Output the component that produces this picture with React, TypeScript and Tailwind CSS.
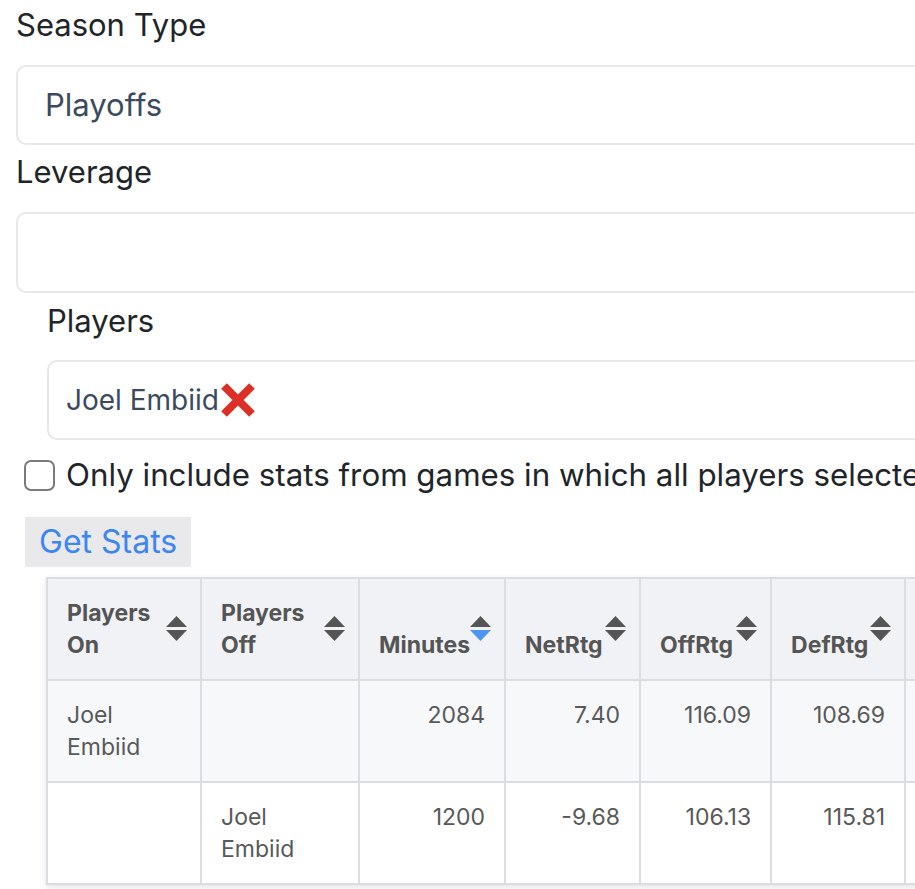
import React from "react";

type Col = { key: string; label: string; width: number; numeric?: boolean; active?: boolean };

const columns: Col[] = [
  { key: "on", label: "Players On", width: 154 },
  { key: "off", label: "Players Off", width: 158 },
  { key: "min", label: "Minutes", width: 146, numeric: true, active: true },
  { key: "net", label: "NetRtg", width: 135, numeric: true },
  { key: "ortg", label: "OffRtg", width: 131, numeric: true },
  { key: "drtg", label: "DefRtg", width: 134, numeric: true },
  { key: "more", label: "", width: 130, numeric: true },
];

const rows: Record<string, string>[] = [
  { on: "Joel Embiid", off: "", min: "2084", net: "7.40", ortg: "116.09", drtg: "108.69", more: "" },
  { on: "", off: "Joel Embiid", min: "1200", net: "-9.68", ortg: "106.13", drtg: "115.81", more: "" },
];

function SortCaret({ active }: { active?: boolean }) {
  return (
    <svg width="21" height="26" viewBox="0 0 21 26" className="absolute right-[13px] top-1/2 -translate-y-1/2">
      <polygon points="10.5,0 21,11 0,11" fill="#555" />
      <polygon points="0,14 21,14 10.5,25" fill={active ? "#4d94f5" : "#555"} />
    </svg>
  );
}

function RedX() {
  return (
    <svg width="38" height="36" viewBox="0 0 38 36" className="shrink-0">
      <line x1="5" y1="4" x2="33" y2="32" stroke="#dc2f27" strokeWidth="8" />
      <line x1="33" y1="4" x2="5" y2="32" stroke="#dc2f27" strokeWidth="8" />
    </svg>
  );
}

const label = "block text-[31px] leading-[38px] text-[#212529]";
const field = "rounded-[10px] border-2 border-[#e8e8ea] bg-white flex items-center text-[#3b4a5e]";

export default function App() {
  return (
    <div className="w-[915px] h-[889px] overflow-hidden bg-white font-['Inter',sans-serif]">
      <div className="w-[1200px] pt-[6px]">
        <div className="pl-4">
          <label className={label}>Season Type</label>
          <div className={`${field} mt-[21px] h-[80px] pl-[27px] text-[31px]`}>Playoffs</div>
          <label className={`${label} mt-[8px]`}>Leverage</label>
          <div className={`${field} mt-[21px] h-[81px]`} />
        </div>

        <div className="pl-[47px]">
          <label className={`${label} mt-[9px]`}>Players</label>
          <div className={`${field} mt-[20px] h-[80px] pl-[17px] text-[28px]`}>
            <span>Joel Embiid</span>
            <RedX />
          </div>
        </div>

        <div className="pl-6 mt-4 h-[38px] flex items-center">
          <span className="w-[31px] h-[31px] rounded-[7px] border-2 border-[#7a7a7a] bg-white shrink-0" />
          <span className="ml-[11px] text-[31.3px] leading-[38px] text-[#212529] whitespace-nowrap">
            Only include stats from games in which all players selected played
          </span>
        </div>

        <button className="ml-[25px] mt-[23px] h-[50px] px-[14px] bg-[#e9e9eb] text-[#3b86f0] text-[32px] leading-[50px]">
          Get Stats
        </button>

        <table className="ml-[46px] mt-[10px] table-fixed border-collapse shadow-[0_2px_6px_rgba(0,0,0,0.12)]">
          <colgroup>
            {columns.map((c) => (
              <col key={c.key} style={{ width: c.width }} />
            ))}
          </colgroup>
          <thead>
            <tr className="bg-[#f1f2f5]">
              {columns.map((c) => (
                <th
                  key={c.key}
                  className="relative border-2 border-[#dcdde2] pl-[19px] pr-[34px] py-[18px] align-bottom text-left text-[23px] leading-[32px] font-bold text-[#555]"
                >
                  {c.label}
                  {c.label && <SortCaret active={c.active} />}
                </th>
              ))}
            </tr>
          </thead>
          <tbody>
            {rows.map((r, i) => (
              <tr key={i} className={i % 2 === 0 ? "bg-[#f7f8fa]" : "bg-white"}>
                {columns.map((c) => (
                  <td
                    key={c.key}
                    className={`border-2 border-[#dcdde2] px-[19px] py-[18px] h-[102px] align-top text-[23px] leading-[32px] text-[#595959] ${c.numeric ? "text-right" : "text-left"}`}
                  >
                    {r[c.key]}
                  </td>
                ))}
              </tr>
            ))}
          </tbody>
        </table>
      </div>
    </div>
  );
}
